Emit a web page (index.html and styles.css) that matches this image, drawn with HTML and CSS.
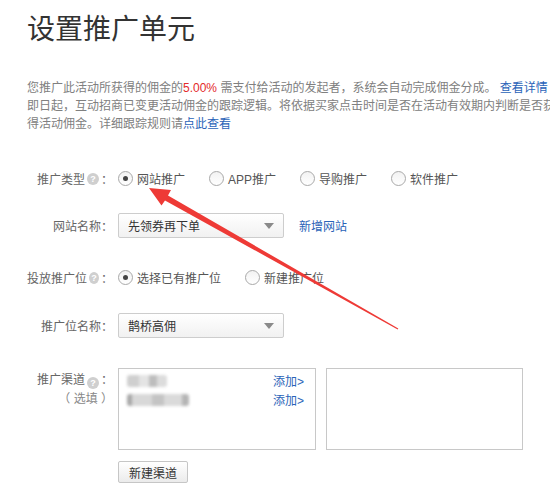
FILE: index.html
```html
<!DOCTYPE html>
<html lang="zh-CN">
<head>
<meta charset="utf-8">
<title>设置推广单元</title>
<link rel="stylesheet" href="styles.css">
</head>
<body>
<div class="page">
  <h1 class="title">设置推广单元</h1>
  <div class="intro">
    <div class="line">您推广此活动所获得的佣金的<span class="red">5.00%</span> 需支付给活动的发起者，系统会自动完成佣金分成。 <a class="link">查看详情</a></div>
    <div class="line">即日起，互动招商已变更活动佣金的跟踪逻辑。将依据买家点击时间是否在活动有效期内判断是否获</div>
    <div class="line">得活动佣金。详细跟踪规则请<a class="link">点此查看</a></div>
  </div>

  <div class="form">
    <div class="row r1">
      <div class="label">推广类型<i class="help">?</i>：</div>
      <div class="radios">
        <label class="radio"><span class="dot checked"></span>网站推广</label>
        <label class="radio"><span class="dot"></span>APP推广</label>
        <label class="radio"><span class="dot"></span>导购推广</label>
        <label class="radio"><span class="dot"></span>软件推广</label>
      </div>
    </div>

    <div class="row r2">
      <div class="label">网站名称：</div>
      <div class="select"><span>先领券再下单</span><i class="caret"></i></div>
      <a class="link add-site">新增网站</a>
    </div>

    <div class="row r3">
      <div class="label">投放推广位<i class="help">?</i>：</div>
      <div class="radios">
        <label class="radio"><span class="dot checked"></span>选择已有推广位</label>
        <label class="radio"><span class="dot"></span>新建推广位</label>
      </div>
    </div>

    <div class="row r4">
      <div class="label">推广位名称：</div>
      <div class="select"><span>鹊桥高佣</span><i class="caret"></i></div>
    </div>

    <div class="row r5">
      <div class="label multi">推广渠道<i class="help">?</i>：<br><span class="opt">（ 选填 ）</span></div>
      <div class="boxes">
        <div class="box">
          <div class="item"><span class="blur w1"></span><a class="link">添加&gt;</a></div>
          <div class="item"><span class="blur w2"></span><a class="link">添加&gt;</a></div>
        </div>
        <div class="box right"></div>
      </div>
    </div>

    <div class="row r6">
      <div class="label"></div>
      <button class="btn">新建渠道</button>
    </div>
  </div>
</div>

<svg class="arrow" width="550" height="491" viewBox="0 0 550 491" aria-hidden="true">
  <polygon points="149,188 171,190 168,195.5 398.3,328.6 397.7,329.4 165,200.5 161.5,205.5" fill="#ee3a36"/>
</svg>
</body>
</html>
```

FILE: styles.css
```css
html, body {
  margin: 0;
  padding: 0;
  background: #fff;
}
body {
  width: 550px;
  height: 491px;
  overflow: hidden;
  position: relative;
  font-family: "Liberation Sans", "Noto Sans CJK SC", sans-serif;
  font-size: 12px;
  color: #555;
}
.page {
  padding-left: 27px;
}
.title {
  margin: 0;
  padding-top: 7px;
  font-size: 28px;
  line-height: 40px;
  font-weight: normal;
  color: #333;
  font-family: "Noto Sans CJK SC", sans-serif;
}
.intro {
  margin-top: 32px;
  color: #808080;
  line-height: 18px;
}
.line {
  white-space: nowrap;
}
.red {
  color: #e42a2a;
}
.link {
  color: #2a63b8;
  text-decoration: none;
  cursor: pointer;
}
.form {
  margin-top: 33px;
}
.row {
  display: flex;
  align-items: center;
  height: 25px;
}
.r2 { margin-top: 22px; }
.r3 { margin-top: 27px; }
.r4 { margin-top: 23px; }
.r5 { margin-top: 30px; align-items: flex-start; height: auto; }
.r6 { margin-top: 11px; height: 22px; }
.label {
  width: 86px;
  margin-right: 5px;
  text-align: right;
  white-space: nowrap;
  color: #666;
  display: flex;
  align-items: center;
  justify-content: flex-end;
}
.label.multi {
  display: block;
  padding-top: 3px;
  line-height: 19px;
}
.label .opt {
  color: #888;
  white-space: pre;
}
.help {
  display: inline-block;
  width: 12px;
  height: 12px;
  margin: 0 2px;
  border-radius: 50%;
  background: #cfcfcf;
  color: #fff;
  font-style: normal;
  font-size: 9px;
  line-height: 12px;
  text-align: center;
  font-weight: bold;
  vertical-align: -2px;
}
.radios {
  display: flex;
  align-items: center;
  gap: 24px;
}
.radio {
  display: flex;
  align-items: center;
  color: #555;
}
.dot {
  width: 13px;
  height: 13px;
  border: 1px solid #a9a9a9;
  border-radius: 50%;
  background: linear-gradient(#f2f2f2, #fff);
  margin-right: 4px;
  position: relative;
  box-sizing: content-box;
}
.dot.checked::after {
  content: "";
  position: absolute;
  left: 4px;
  top: 4px;
  width: 5px;
  height: 5px;
  border-radius: 50%;
  background: #444;
}
.select {
  box-sizing: border-box;
  width: 166px;
  height: 25px;
  border: 1px solid #cdcdcd;
  border-radius: 2px;
  background: linear-gradient(#fff, #f1f1f1);
  display: flex;
  align-items: center;
  justify-content: space-between;
  padding: 0 9px 0 9px;
  color: #333;
}
.caret {
  width: 0;
  height: 0;
  border-left: 5px solid transparent;
  border-right: 5px solid transparent;
  border-top: 6px solid #8a8a8a;
}
.add-site {
  margin-left: 15px;
}
.boxes {
  display: flex;
  gap: 10px;
}
.box {
  box-sizing: border-box;
  width: 198px;
  height: 82px;
  border: 1px solid #c8c8c8;
  padding: 2px 11px 0 8px;
}
.box.right {
  width: 197px;
}
.item {
  display: flex;
  align-items: center;
  justify-content: space-between;
  height: 19px;
}
.blur {
  display: block;
  height: 12px;
  border-radius: 3px;
  filter: blur(1.5px);
}
.blur.w1 {
  width: 40px;
  background: linear-gradient(90deg, #cfcfcf 0 30%, #e4e4e4 30% 55%, #bdbdbd 55% 75%, #dcdcdc 75%);
}
.blur.w2 {
  width: 62px;
  background: linear-gradient(90deg, #a8a8a8 0 8%, #d8d8d8 8% 40%, #c4c4c4 40% 60%, #dadada 60% 88%, #b5b5b5 88%);
}
.btn {
  box-sizing: border-box;
  width: 70px;
  height: 22px;
  border: 1px solid #c6c6c6;
  border-radius: 2px;
  background: linear-gradient(#fff, #ebebeb);
  font-family: "Liberation Sans", "Noto Sans CJK SC", sans-serif;
  font-size: 12px;
  color: #333;
  padding: 0;
  cursor: pointer;
}
.arrow {
  position: absolute;
  left: 0;
  top: 0;
  pointer-events: none;
}
```
